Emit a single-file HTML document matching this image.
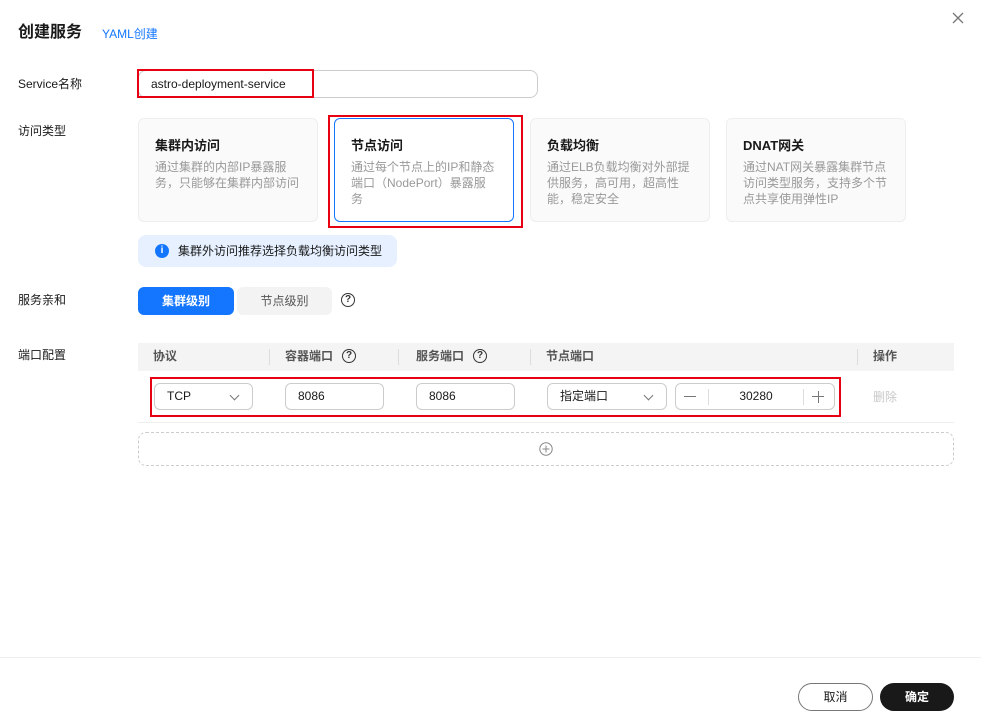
<!DOCTYPE html>
<html><head><meta charset="utf-8"><style>
*{box-sizing:border-box;margin:0;padding:0}
body{width:981px;height:720px;background:#fff;position:relative;font-family:"Liberation Sans","Noto Sans CJK SC",sans-serif;font-size:12px;color:#191919;overflow:hidden}
.a{position:absolute}
.lbl{position:absolute;left:18px;font-size:12px;color:#191919;line-height:16px}
.card{position:absolute;top:118px;width:180px;height:104px;background:#fafafa;border:1px solid #eee;border-radius:6px;padding:0 16px}
.card b{display:block;margin-top:18px;font-size:13px;line-height:18px;color:#191919}
.card p{margin-top:4px;color:#999;line-height:16px;font-size:12px}
.red{position:absolute;border:2px solid #e60012}
.inp{position:absolute;top:383px;height:27px;border:1px solid #ccc;border-radius:6px;padding-left:12px;line-height:25px;font-size:12px;background:#fff}
.chev{position:absolute;right:14px;top:8px;width:7px;height:7px;border-right:1.3px solid #777;border-bottom:1.3px solid #777;transform:rotate(45deg)}
.q{position:absolute;width:14px;height:14px;border:1.3px solid #333;border-radius:50%;font-size:10px;text-align:center;line-height:12px;font-weight:bold;color:#333}
.sep{position:absolute;top:349px;width:1px;height:16px;background:#ddd}
.th{position:absolute;top:348px;font-size:12px;color:#555;font-weight:bold;line-height:16px}
</style></head><body>
<div class="a" style="left:18px;top:22px;font-size:16px;font-weight:bold;line-height:22px">创建服务</div>
<div class="a" style="left:102px;top:26px;font-size:12px;color:#1476ff;line-height:16px">YAML创建</div>
<svg class="a" style="left:952px;top:12px" width="12" height="12"><path d="M1 1L11 11M11 1L1 11" stroke="#777" stroke-width="1.3"/></svg>

<div class="lbl" style="top:76px">Service名称</div>
<div class="a" style="left:138px;top:70px;width:400px;height:28px;border:1px solid #ccc;border-radius:8px;padding-left:12px;line-height:26px">astro-deployment-service</div>
<div class="red" style="left:137px;top:69px;width:177px;height:29px"></div>

<div class="lbl" style="top:123px">访问类型</div>
<div class="card" style="left:138px"><b>集群内访问</b><p>通过集群的内部IP暴露服务，只能够在集群内部访问</p></div>
<div class="card" style="left:334px;background:#fff;border:1px solid #1476ff"><b>节点访问</b><p>通过每个节点上的IP和静态端口（NodePort）暴露服务</p></div>
<div class="card" style="left:530px"><b>负载均衡</b><p>通过ELB负载均衡对外部提供服务，高可用，超高性能，稳定安全</p></div>
<div class="card" style="left:726px"><b>DNAT网关</b><p>通过NAT网关暴露集群节点访问类型服务，支持多个节点共享使用弹性IP</p></div>
<div class="red" style="left:328px;top:115px;width:195px;height:113px"></div>

<div class="a" style="left:138px;top:235px;width:259px;height:32px;background:#e6f0ff;border-radius:8px"></div>
<div class="a" style="left:155px;top:244px;width:14px;height:14px;border-radius:50%;background:#1476ff;color:#fff;font-size:10px;font-weight:bold;text-align:center;line-height:14px">i</div>
<div class="a" style="left:178px;top:243px;line-height:16px">集群外访问推荐选择负载均衡访问类型</div>

<div class="lbl" style="top:292px">服务亲和</div>
<div class="a" style="left:138px;top:287px;width:96px;height:28px;background:#1476ff;border-radius:6px;color:#fff;text-align:center;line-height:28px;font-weight:bold">集群级别</div>
<div class="a" style="left:237px;top:287px;width:95px;height:28px;background:#f3f3f3;border-radius:6px;color:#555;text-align:center;line-height:28px">节点级别</div>
<div class="q" style="left:341px;top:293px">?</div>

<div class="lbl" style="top:347px">端口配置</div>
<div class="a" style="left:138px;top:343px;width:816px;height:28px;background:#f4f4f4"></div>
<div class="th" style="left:153px">协议</div>
<div class="sep" style="left:269px"></div>
<div class="th" style="left:285px">容器端口</div><div class="q" style="left:342px;top:349px">?</div>
<div class="sep" style="left:398px"></div>
<div class="th" style="left:416px">服务端口</div><div class="q" style="left:473px;top:349px">?</div>
<div class="sep" style="left:530px"></div>
<div class="th" style="left:546px">节点端口</div>
<div class="sep" style="left:857px"></div>
<div class="th" style="left:873px">操作</div>
<div class="a" style="left:138px;top:422px;width:816px;height:1px;background:#eee"></div>

<div class="inp" style="left:154px;width:99px">TCP<span class="chev"></span></div>
<div class="inp" style="left:285px;width:99px">8086</div>
<div class="inp" style="left:416px;width:99px">8086</div>
<div class="inp" style="left:547px;width:120px">指定端口<span class="chev"></span></div>
<div class="inp" style="left:675px;width:160px;padding:0">
<span class="a" style="left:8px;top:12px;width:12px;height:1.3px;background:#777"></span>
<span class="a" style="left:32px;top:5px;width:1px;height:16px;background:#ddd"></span>
<span class="a" style="left:33px;width:94px;text-align:center">30280</span>
<span class="a" style="left:127px;top:5px;width:1px;height:16px;background:#ddd"></span>
<span class="a" style="left:136px;top:12px;width:12px;height:1.3px;background:#777"></span>
<span class="a" style="left:141.5px;top:6.5px;width:1.3px;height:12px;background:#777"></span>
</div>
<div class="a" style="left:873px;top:389px;color:#c8c8c8;line-height:16px">删除</div>
<div class="red" style="left:150px;top:377px;width:691px;height:40px"></div>

<div class="a" style="left:138px;top:432px;width:816px;height:34px;border:1px dashed #ccc;border-radius:8px"></div>
<svg class="a" style="left:539px;top:442px" width="14" height="14"><circle cx="7" cy="7" r="6.2" fill="none" stroke="#888" stroke-width="1"/><path d="M7 3.5V10.5M3.5 7H10.5" stroke="#888" stroke-width="1"/></svg>

<div class="a" style="left:0;top:657px;width:981px;height:1px;background:#eee"></div>
<div class="a" style="left:798px;top:683px;width:75px;height:28px;border:1px solid #777;border-radius:14px;text-align:center;line-height:26px;font-size:12px">取消</div>
<div class="a" style="left:880px;top:683px;width:74px;height:28px;background:#191919;border-radius:14px;text-align:center;line-height:28px;color:#fff;font-weight:bold">确定</div>
</body></html>
